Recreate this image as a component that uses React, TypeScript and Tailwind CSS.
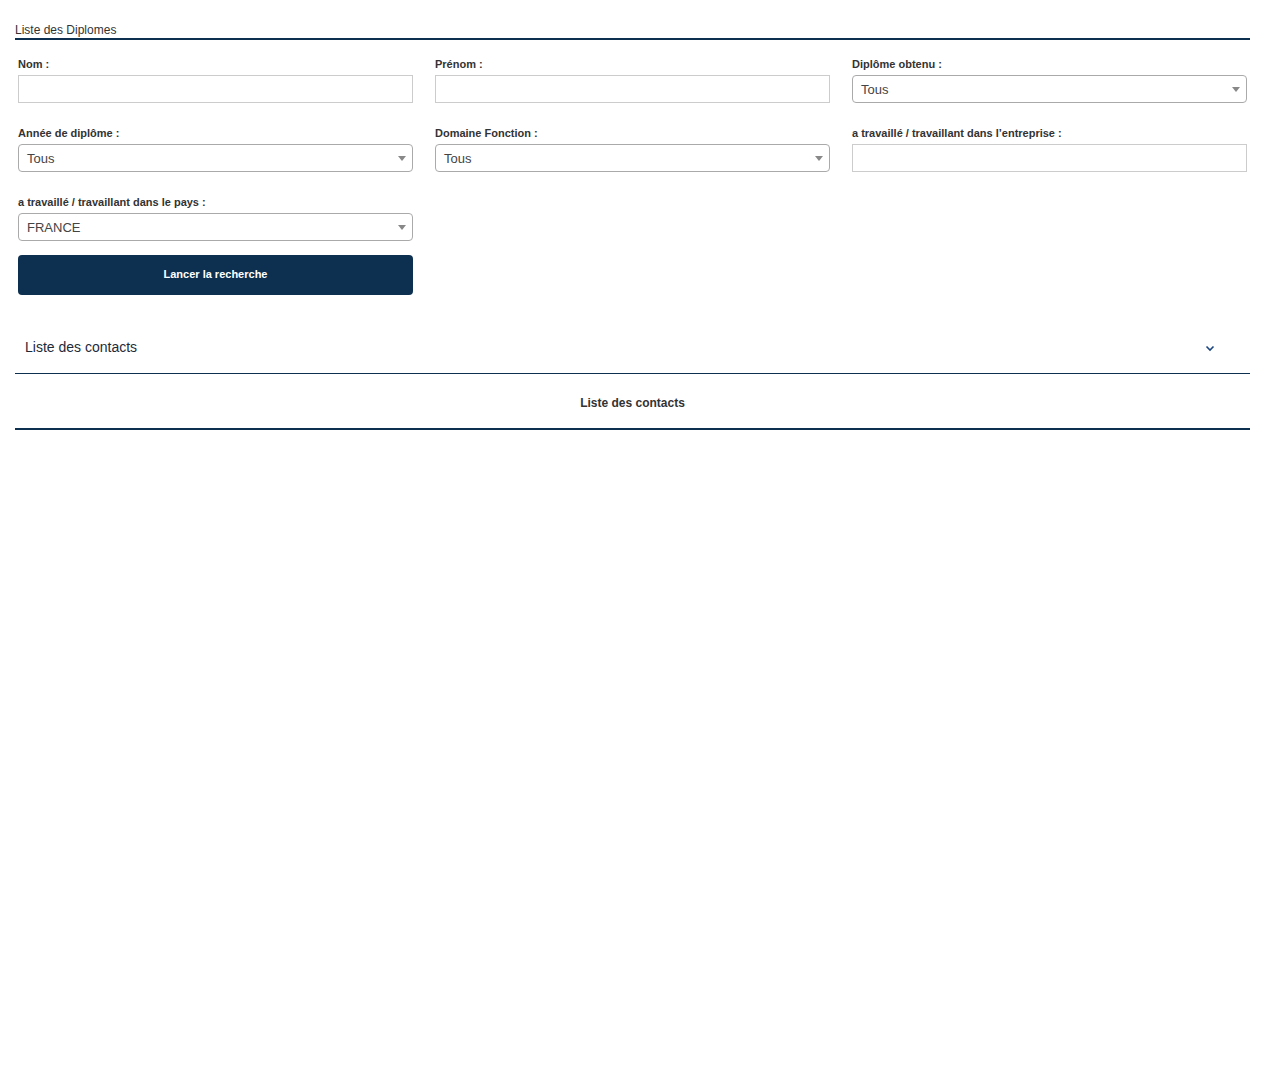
import React from 'react'

const navy = '#0d2f50'

function Label({ children }: { children: React.ReactNode }) {
  return (
    <label className="block text-[11px] leading-[13px] font-bold text-[#333] mb-[4px]">{children}</label>
  )
}

function TextField({ label }: { label: string }) {
  return (
    <div>
      <Label>{label}</Label>
      <input
        type="text"
        className="block w-full h-[28px] border border-[#ccc] bg-white px-2 text-[13px] text-[#444] outline-none"
      />
    </div>
  )
}

function SelectField({ label, value }: { label: string; value: string }) {
  return (
    <div>
      <Label>{label}</Label>
      <div className="relative h-[28px] w-full rounded-[4px] border border-[#aaa] bg-white flex items-center pl-[8px] pt-[2px]">
        <span className="text-[13px] leading-[16px] text-[#444]">{value}</span>
        <span className="absolute right-[6px] top-[11px] w-0 h-0 border-l-[4px] border-r-[4px] border-t-[5px] border-l-transparent border-r-transparent border-t-[#888]" />
      </div>
    </div>
  )
}

export default function App() {
  return (
    <div className="min-h-[1095px] bg-white px-[15px] pt-[23px]" style={{ fontFamily: '"Liberation Sans", Arial, sans-serif' }}>
      <div className="w-[1235px]">
        <div className="border-b-2 border-[#0d2f50] pb-[1px]">
          <h2 className="text-[12px] leading-[14px] text-[#333]">Liste des Diplomes</h2>
        </div>

        <form className="pt-[18px] pl-[3px] pr-[3px]" onSubmit={(e) => e.preventDefault()}>
          <div className="grid grid-cols-3 gap-x-[22px] gap-y-[24px]">
            <TextField label="Nom :" />
            <TextField label="Prénom :" />
            <SelectField label="Diplôme obtenu :" value="Tous" />
            <SelectField label="Année de diplôme :" value="Tous" />
            <SelectField label="Domaine Fonction :" value="Tous" />
            <TextField label="a travaillé / travaillant dans l’entreprise :" />
            <SelectField label="a travaillé / travaillant dans le pays :" value="FRANCE" />
          </div>
          <div className="grid grid-cols-3 gap-x-[22px] mt-[14px]">
            <button
              type="submit"
              className="h-[40px] rounded-[4px] text-white text-[11px] leading-[13px] font-bold pb-[2px]"
              style={{ backgroundColor: navy }}
            >
              Lancer la recherche
            </button>
          </div>
        </form>

        <div className="mt-[27px]">
          <div className="flex items-center justify-between pl-[10px] pr-[35px] pt-[16px] pb-[17px] border-b border-[#0d2f50]">
            <span className="text-[14px] leading-[18px] text-[#1e2a3a]">Liste des contacts</span>
            <svg width="10" height="7" viewBox="0 0 10 7" fill="none" className="mt-[3px]">
              <path d="M1.5 1.5 L5 5 L8.5 1.5" stroke="#1c4680" strokeWidth="1.6" />
            </svg>
          </div>
          <div className="border-b-2 border-[#0d2f50] pt-[22px] pb-[18px] text-center text-[12px] leading-[14px] font-bold text-[#333]">
            Liste des contacts
          </div>
        </div>
      </div>
    </div>
  )
}
